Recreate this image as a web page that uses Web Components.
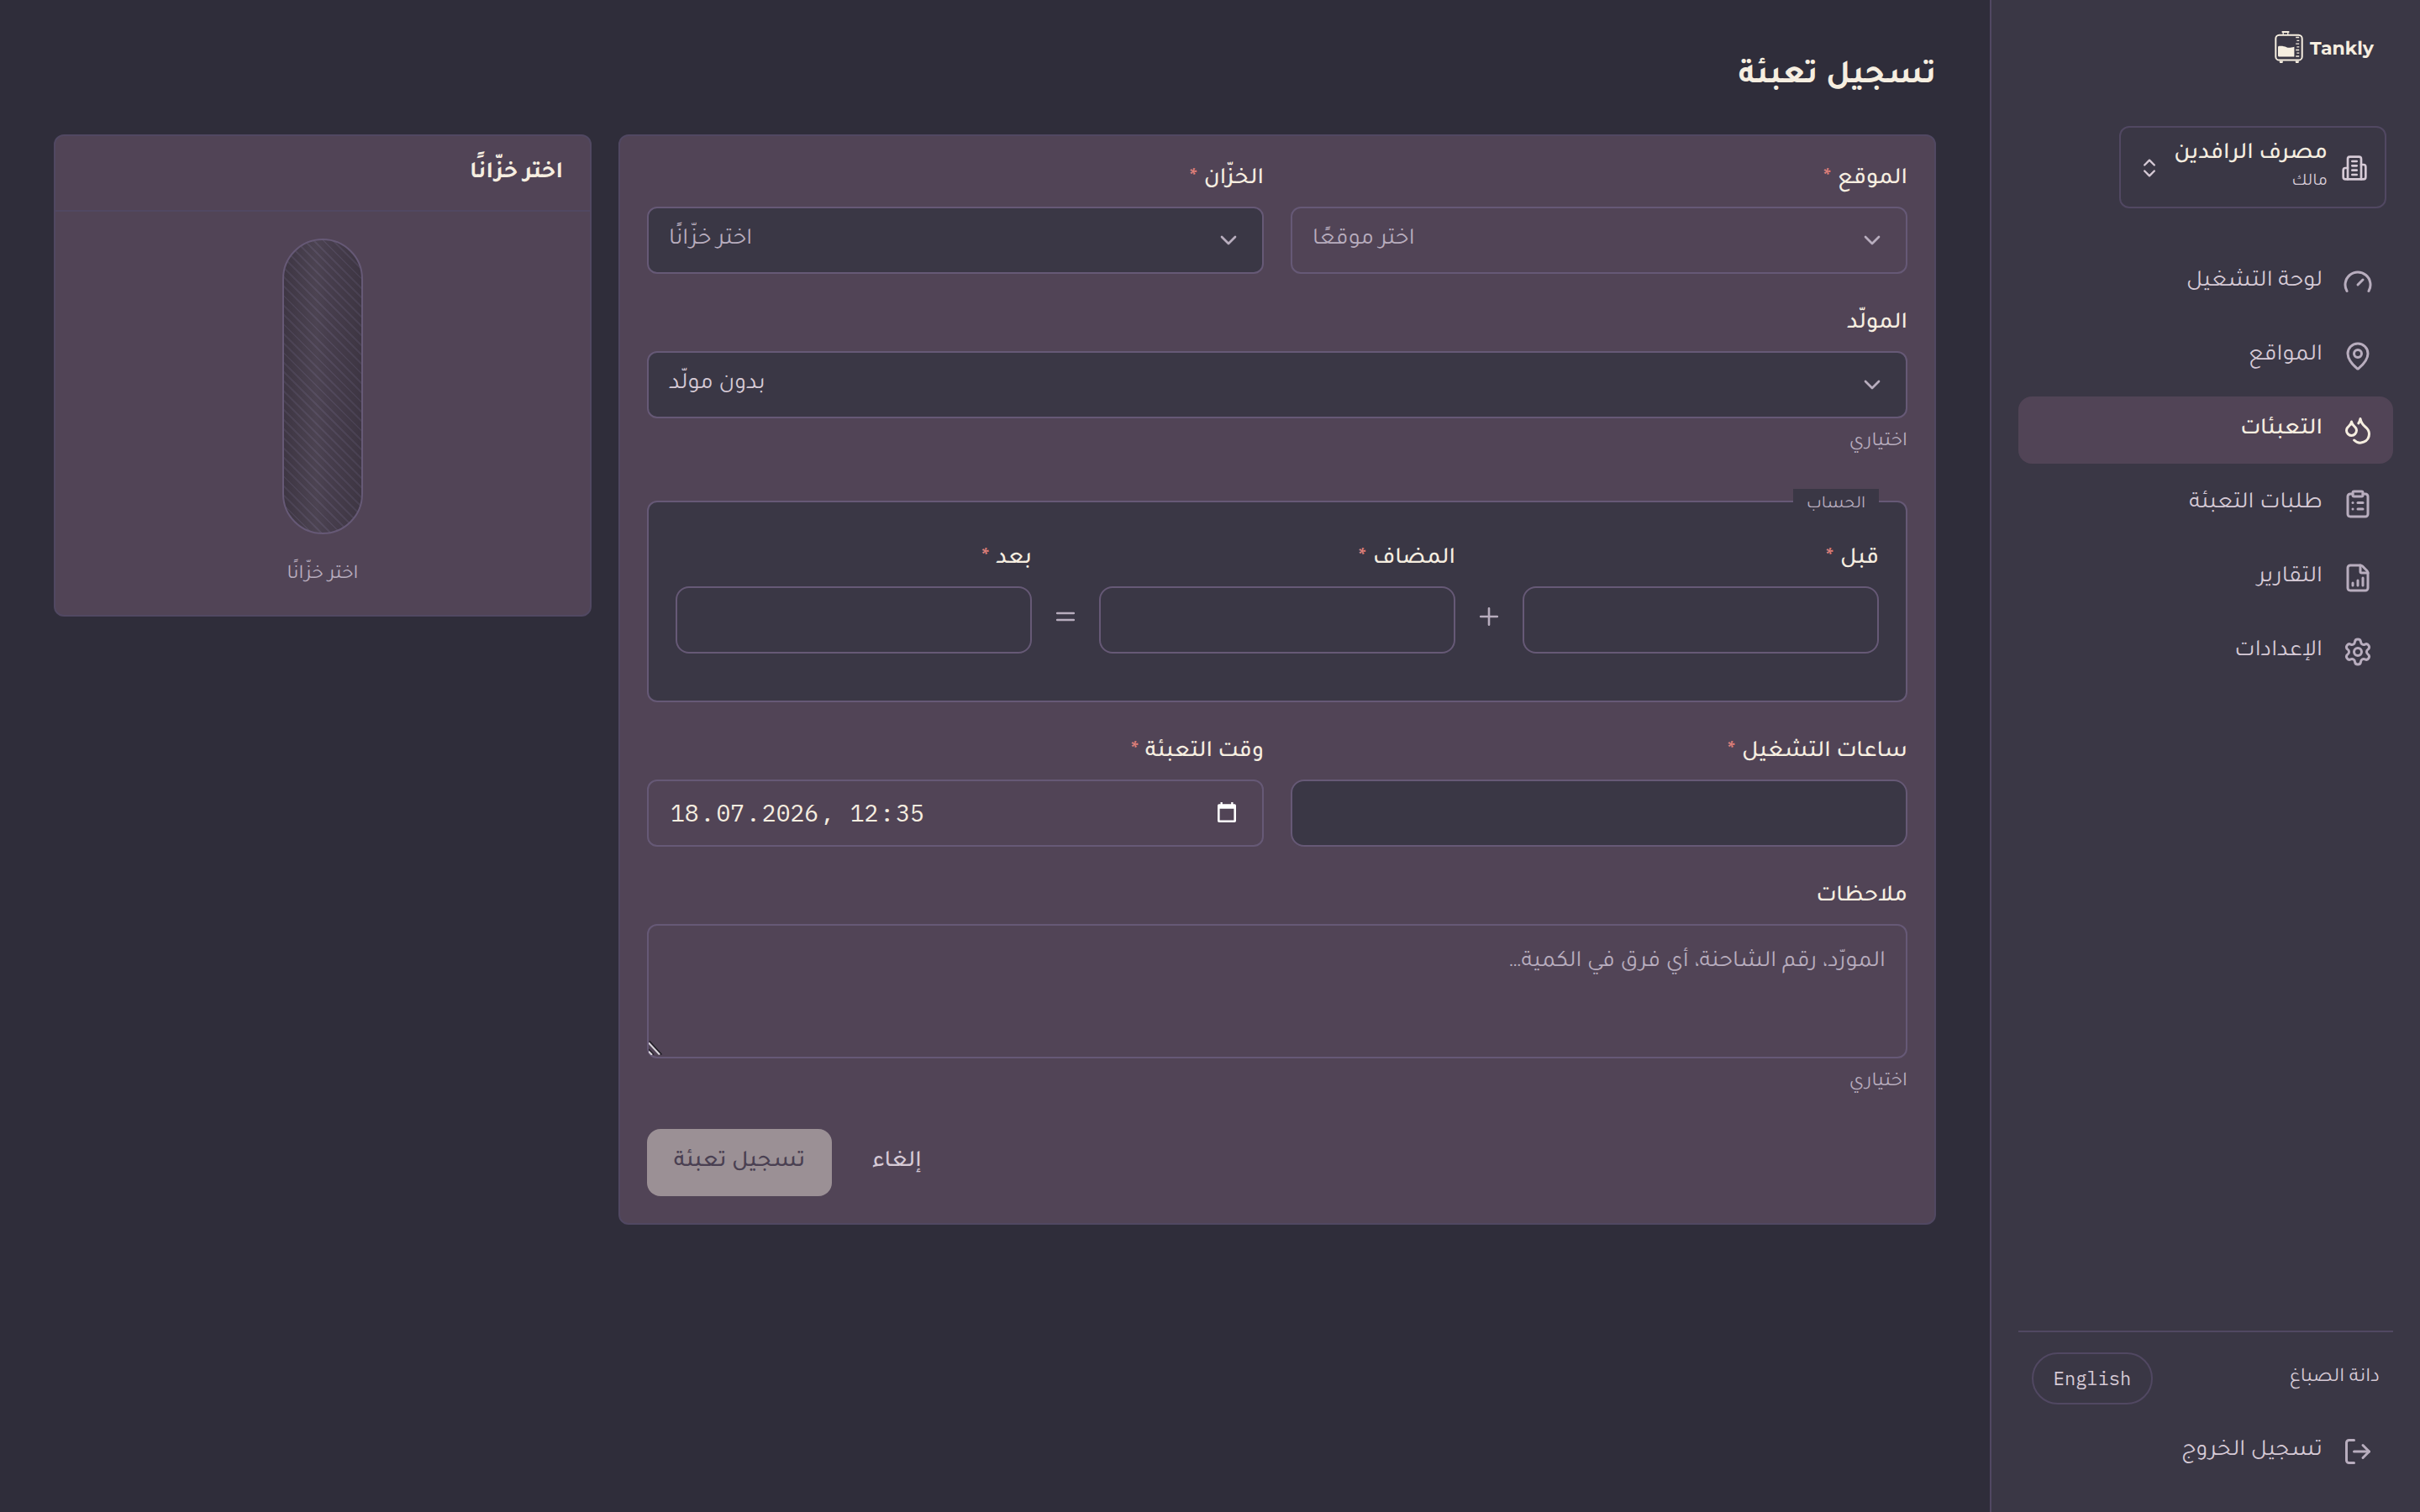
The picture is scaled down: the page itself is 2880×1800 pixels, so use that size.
<!DOCTYPE html>
<html lang="ar" dir="rtl">
<head>
<meta charset="utf-8">
<title>Tankly</title>
<style>
  html, body { margin: 0; height: 100%; }
  body {
    --bg: #2f2d3a; --side: #3a3745; --panel: #514456; --line: #514862; --field-line: #665976;
    --cream: #f6eee0; --lilac: #d6cad6; --muted: #b8adbe; --danger: #e0807a;
    background: var(--bg); color: var(--cream);
    font: 400 28px/40px Tajawal, "Noto Sans Arabic", sans-serif;
  }
</style>
</head>
<body>
<app-shell>
  <app-sidebar slot="side"></app-sidebar>
  <page-title>تسجيل تعبئة</page-title>
  <div style="display:flex;gap:32px;align-items:flex-start">
    <refill-form></refill-form>
    <tank-card heading="اختر خزّانًا" caption="اختر خزّانًا"></tank-card>
  </div>
</app-shell>
<script>
const ICONS = {
  gauge: '<path d="m12 14 4-4"/><path d="M3.34 19a10 10 0 1 1 17.32 0"/>',
  pin: '<path d="M20 10c0 4.993-5.539 10.193-7.399 11.799a1 1 0 0 1-1.202 0C9.539 20.193 4 14.993 4 10a8 8 0 0 1 16 0"/><circle cx="12" cy="10" r="3"/>',
  droplets: '<path d="M7 16.3c2.2 0 4-1.83 4-4.05 0-1.16-.57-2.26-1.71-3.19S7.29 6.75 7 5.3c-.29 1.45-1.14 2.84-2.29 3.76S3 11.1 3 12.25c0 2.22 1.8 4.05 4 4.05z"/><path d="M12.56 6.6A10.97 10.97 0 0 0 14 3.02c.5 2.5 2 4.9 4 6.5s3 3.5 3 5.5a6.98 6.98 0 0 1-11.91 4.97"/>',
  clipboard: '<rect width="8" height="4" x="8" y="2" rx="1" ry="1"/><path d="M16 4h2a2 2 0 0 1 2 2v14a2 2 0 0 1-2 2H6a2 2 0 0 1-2-2V6a2 2 0 0 1 2-2h2"/><path d="M12 11h4"/><path d="M12 16h4"/><path d="M8 11h.01"/><path d="M8 16h.01"/>',
  report: '<path d="M6 22a2 2 0 0 1-2-2V4a2 2 0 0 1 2-2h8a2.4 2.4 0 0 1 1.704.706l3.588 3.588A2.4 2.4 0 0 1 20 8v12a2 2 0 0 1-2 2z"/><path d="M14 2v5a1 1 0 0 0 1 1h5"/><path d="M8 18v-2"/><path d="M12 18v-4"/><path d="M16 18v-6"/>',
  settings: '<path d="M9.671 4.136a2.34 2.34 0 0 1 4.659 0 2.34 2.34 0 0 0 3.319 1.915 2.34 2.34 0 0 1 2.33 4.033 2.34 2.34 0 0 0 0 3.831 2.34 2.34 0 0 1-2.33 4.033 2.34 2.34 0 0 0-3.319 1.915 2.34 2.34 0 0 1-4.659 0 2.34 2.34 0 0 0-3.32-1.915 2.34 2.34 0 0 1-2.33-4.033 2.34 2.34 0 0 0 0-3.831A2.34 2.34 0 0 1 6.35 6.051a2.34 2.34 0 0 0 3.319-1.915"/><circle cx="12" cy="12" r="3"/>',
  logout: '<path d="m16 17 5-5-5-5"/><path d="M21 12H9"/><path d="M9 21H5a2 2 0 0 1-2-2V5a2 2 0 0 1 2-2h4"/>',
  building: '<path d="M6 22V4a2 2 0 0 1 2-2h8a2 2 0 0 1 2 2v18Z"/><path d="M6 12H4a2 2 0 0 0-2 2v6a2 2 0 0 0 2 2h2"/><path d="M18 9h2a2 2 0 0 1 2 2v9a2 2 0 0 1-2 2h-2"/><path d="M10 6h4"/><path d="M10 10h4"/><path d="M10 14h4"/><path d="M10 18h4"/>',
  updown: '<path d="m7 15 5 5 5-5"/><path d="m7 9 5-5 5 5"/>',
  down: '<path d="m6 9 6 6 6-6"/>'
};
const define = (name, render) => customElements.define(name, class extends HTMLElement {
  connectedCallback() {
    if (this.shadowRoot) return;
    const t = document.createElement('template');
    t.innerHTML = render(this);
    this.attachShadow({ mode: 'open' }).append(t.content.cloneNode(true));
  }
});
const attr = (el, n, d = '') => el.getAttribute(n) ?? d;

define('ui-icon', el => `
  <style>:host{display:block;flex:none;width:${attr(el,'size','36')}px;height:${attr(el,'size','36')}px}svg{display:block;width:100%;height:100%}</style>
  <svg viewBox="0 0 24 24" fill="none" stroke="currentColor" stroke-width="2" stroke-linecap="round" stroke-linejoin="round">${ICONS[attr(el,'name')]}</svg>`);

define('app-shell', () => `
  <style>
    :host{display:flex;width:2880px;height:1800px;overflow:hidden}
    main{flex:1;box-sizing:border-box;padding:60px 64px 0;display:flex;flex-direction:column;min-width:0}
  </style>
  <slot name="side"></slot><main><slot></slot></main>`);

define('page-title', () => `
  <style>:host{display:block;font-weight:700;font-size:40px;line-height:64px;height:64px;margin-bottom:36px}</style><slot></slot>`);

define('tankly-logo', () => `
  <style>:host{display:block;height:44px}svg{display:block}text{font:700 22.3px Montserrat,sans-serif}</style>
  <svg width="122" height="44" viewBox="2705 35 122 44" fill="#f6eee0" direction="ltr">
    <rect x="2708.3" y="41.7" width="31.4" height="29.9" rx="4.2" fill="none" stroke="#f6eee0" stroke-width="2"/>
    <rect x="2715.6" y="36.900" width="8.800" height="2.100" rx=".6"/>
    <path d="M2717.200 38.500v2.600M2722.800 38.500v2.600" stroke="#f6eee0" stroke-width="1.300"/>
    <path d="M2712.800 72.500h4v1.600q0 1-1 1h-2q-1 0-1-1zM2731.800 72.500h4v1.600q0 1-1 1h-2q-1 0-1-1z"/>
    <path d="M2711 56.200q0-1.400 1.600-1.400c3.600-.2 6.200.3 8.600 1.500 2.400 1 4.800.6 9.200-.6V67.600H2712.400q-1.400 0-1.400-1.400z"/>
    <path d="M2732.200 44.500h4M2733.400 48.300h2.900M2732.200 52.100h4M2733.400 55.800h2.900M2732.200 59.500h4M2733.400 63.200h2.900M2732.200 67h4" stroke="#f6eee0" stroke-width="1.300"/>
    <text x="2749" y="64.700" textLength="76" lengthAdjust="spacingAndGlyphs">Tankly</text>
  </svg>`);

define('org-switcher', () => `
  <style>
    :host{display:flex;align-items:center;gap:16px;align-self:flex-start;box-sizing:border-box;height:98px;width:318px;padding:0 20px;margin:0 8px;border:2px solid var(--line);border-radius:12px}
    .i{color:var(--lilac);margin-top:2px}
    div{flex:1;min-width:0;display:flex;flex-direction:column;white-space:nowrap}
    b{font-weight:500;line-height:36px}
    small{font-size:20.8px;line-height:30px;color:var(--lilac)}
  </style>
  <ui-icon class="i" name="building" size="32"></ui-icon>
  <div><b>مصرف الرافدين</b><small>مالك</small></div>
  <ui-icon class="i" name="updown" size="28"></ui-icon>`);

define('nav-item', el => `
  <style>
    :host{display:flex;align-items:center;gap:24px;box-sizing:border-box;height:80px;padding:0 24px;border-radius:16px;color:var(--lilac)}
    :host([active]){background:var(--panel);color:var(--cream);font-weight:500}
    ui-icon{color:var(--muted)}
    :host([active]) ui-icon{color:var(--cream)}
  </style>
  <ui-icon name="${attr(el,'icon')}"></ui-icon><span><slot></slot></span>`);

define('app-sidebar', () => `
  <style>
    :host{display:flex;flex-direction:column;flex:none;box-sizing:border-box;width:512px;height:1800px;padding:35px 32px 32px;background:var(--side);border-left:2px solid var(--line)}
    tankly-logo{align-self:flex-start;margin-right:21px;margin-bottom:71px}
    nav{display:flex;flex-direction:column;gap:8px;margin-top:48px}
    footer{margin-top:auto;border-top:2px solid var(--line);padding-top:24px;display:flex;flex-direction:column;gap:16px}
    .user{display:flex;justify-content:space-between;align-items:center;padding:0 16px;height:62px}
    .name{font-size:24px;color:var(--lilac)}
    .lang{box-sizing:border-box;width:144px;height:62px;border:2px solid var(--line);border-radius:31px;text-align:center;font:400 22px/58px "IBM Plex Mono","Liberation Mono",monospace;color:var(--lilac)}
  </style>
  <tankly-logo></tankly-logo>
  <org-switcher></org-switcher>
  <nav>
    <nav-item icon="gauge">لوحة التشغيل</nav-item>
    <nav-item icon="pin">المواقع</nav-item>
    <nav-item icon="droplets" active>التعبئات</nav-item>
    <nav-item icon="clipboard">طلبات التعبئة</nav-item>
    <nav-item icon="report">التقارير</nav-item>
    <nav-item icon="settings">الإعدادات</nav-item>
  </nav>
  <footer>
    <div class="user"><span class="name">دانة الصباغ</span><span class="lang">English</span></div>
    <nav-item icon="logout">تسجيل الخروج</nav-item>
  </footer>`);

define('form-field', el => `
  <style>
    :host{display:flex;flex-direction:column;flex:1;min-width:0}
    .l{font-weight:500;height:40px;margin-bottom:12px}
    .l i{font-style:normal;color:var(--danger);margin-inline-start:1.5px}
    .h{font-size:24px;line-height:36px;height:36px;margin-top:11px;margin-bottom:-3px;color:var(--muted)}
  </style>
  <div class="l">${attr(el,'label')}${el.hasAttribute('required') ? ' <i>*</i>' : ''}</div>
  <slot></slot>
  ${el.hasAttribute('hint') ? `<div class="h">${attr(el,'hint')}</div>` : ''}`);

define('select-box', () => `
  <style>
    :host{display:flex;align-items:center;justify-content:space-between;box-sizing:border-box;height:80px;padding:0 24px;border:2px solid var(--field-line);border-radius:12px;background:var(--side);color:var(--muted)}
    :host([plain]){background:transparent}
    :host([filled]) span{color:var(--lilac)}
  </style>
  <ui-icon name="down" size="32"></ui-icon><span><slot></slot></span>`);

define('text-box', () => `
  <style>:host{display:block;box-sizing:border-box;height:80px;border:2px solid var(--field-line);border-radius:16px;background:var(--side)}</style>`);

define('date-box', () => `
  <style>
    :host{display:flex;direction:ltr;align-items:center;justify-content:space-between;box-sizing:border-box;height:80px;padding:0 30px 0 24px;border:2px solid var(--field-line);border-radius:12px;font-family:"IBM Plex Mono","Liberation Mono",monospace}
    div{white-space:pre}
    span{padding:0 2px}
    svg{display:block;margin-bottom:2px}
  </style>
  <div><span>18</span>.<span>07</span>.<span>2026</span>, <span>12</span>:<span>35</span></div>
  <svg width="24" height="26" viewBox="0 0 24 26" fill="#fff"><path fill-rule="evenodd" d="M2.700 3.200H21.300Q23 3.200 23 4.900V23.300Q23 25 21.300 25H2.700Q1 25 1 23.300V4.900Q1 3.200 2.700 3.200ZM3.600 8.700V22.600H20.400V8.700Z"/><path d="M4.500 1h2.300v3H4.500zM17.200 1h2.300v3h-2.300z"/></svg>`);

define('note-box', () => `
  <style>
    :host{display:flex;box-sizing:border-box;height:160px;padding:24px 24px;border:2px solid var(--field-line);border-radius:12px;color:var(--muted);position:relative}
    svg{position:absolute;left:0;bottom:2px}
  </style>
  <slot></slot>
  <svg width="16" height="17" viewBox="0 0 16 17" fill="none"><path d="M1 .5 15.500 16.500M0 10l6 6.500" stroke="#1d1b22" stroke-width="1.400"/><path d="M0 2.500 13 16.500M0 12.800l4 4" stroke="#d8d4da" stroke-width="2"/></svg>`);

define('op-sign', el => `
  <style>:host{display:flex;flex:none;width:80px;height:80px;margin-top:52px;align-items:center;justify-content:center;color:var(--muted)}svg{display:block;margin-top:-8px}</style>
  <svg width="24" height="24" viewBox="0 0 24 24" stroke="currentColor" stroke-width="2.600" stroke-linecap="round"><path d="${attr(el,'kind') === 'plus' ? 'M12 2.200v19.600M2.200 12h19.600' : 'M2.200 8h19.600M2.200 16h19.600'}"/></svg>`);

define('calc-box', el => `
  <style>
    :host{display:flex;position:relative;box-sizing:border-box;margin-top:14px;height:240px;padding:48px 32px 0;border:2px solid var(--field-line);border-radius:12px;background:var(--side)}
    .legend{position:absolute;top:-16px;right:32px;width:102px;box-sizing:border-box;height:30px;text-align:center;background:var(--side);font-size:20.8px;line-height:39px;color:var(--muted)}
  </style>
  <span class="legend">${attr(el,'legend')}</span><slot></slot>`);

define('refill-form', () => `
  <style>
    :host{display:flex;flex-direction:column;gap:40px;box-sizing:border-box;width:1568px;height:1298px;padding:32px;border:2px solid var(--line);border-radius:12px;background:var(--panel)}
    .row{display:flex;gap:32px}
    .actions{display:flex;justify-content:flex-end;align-items:center;gap:16px;height:80px;font-weight:500}
    .cancel{padding:0 31px 0 32px;color:var(--lilac)}
    .submit{box-sizing:border-box;width:220px;height:80px;line-height:80px;text-align:center;border-radius:16px;background:#9b9095;color:#4a4052}
  </style>
  <div class="row">
    <form-field label="الموقع" required><select-box plain>اختر موقعًا</select-box></form-field>
    <form-field label="الخزّان" required><select-box>اختر خزّانًا</select-box></form-field>
  </div>
  <div class="row"><form-field label="المولّد" hint="اختياري"><select-box filled>بدون مولّد</select-box></form-field></div>
  <calc-box legend="الحساب">
    <form-field label="قبل" required><text-box></text-box></form-field>
    <op-sign kind="plus"></op-sign>
    <form-field label="المضاف" required><text-box></text-box></form-field>
    <op-sign kind="equals"></op-sign>
    <form-field label="بعد" required><text-box></text-box></form-field>
  </calc-box>
  <div class="row">
    <form-field label="ساعات التشغيل" required><text-box></text-box></form-field>
    <form-field label="وقت التعبئة" required><date-box></date-box></form-field>
  </div>
  <div class="row"><form-field label="ملاحظات" hint="اختياري"><note-box>المورّد، رقم الشاحنة، أي فرق في الكمية…</note-box></form-field></div>
  <div class="actions"><span class="cancel">إلغاء</span><span class="submit">تسجيل تعبئة</span></div>`);

define('tank-card', el => `
  <style>
    :host{display:flex;flex-direction:column;box-sizing:border-box;width:640px;height:574px;border:2px solid var(--line);border-radius:12px;background:var(--panel)}
    header{box-sizing:border-box;height:90px;padding:25px 32px 0;border-bottom:2px solid var(--line);font-weight:700}
    .body{display:flex;flex-direction:column;align-items:center;padding-top:32px}
    .tank{box-sizing:border-box;width:96px;height:352px;border:2px solid var(--field-line);border-radius:48px;
      background:linear-gradient(90deg,#0000001f,#ffffff08 42%,#0000 60%,#0000001f),repeating-linear-gradient(45deg,#463d4c 0 6px,#51485b 6px 8px)}
    .cap{margin-top:31px;font-size:24px;line-height:36px;color:var(--muted)}
  </style>
  <header>${attr(el,'heading')}</header>
  <div class="body"><div class="tank"></div><div class="cap">${attr(el,'caption')}</div></div>`);
</script>
</body>
</html>
